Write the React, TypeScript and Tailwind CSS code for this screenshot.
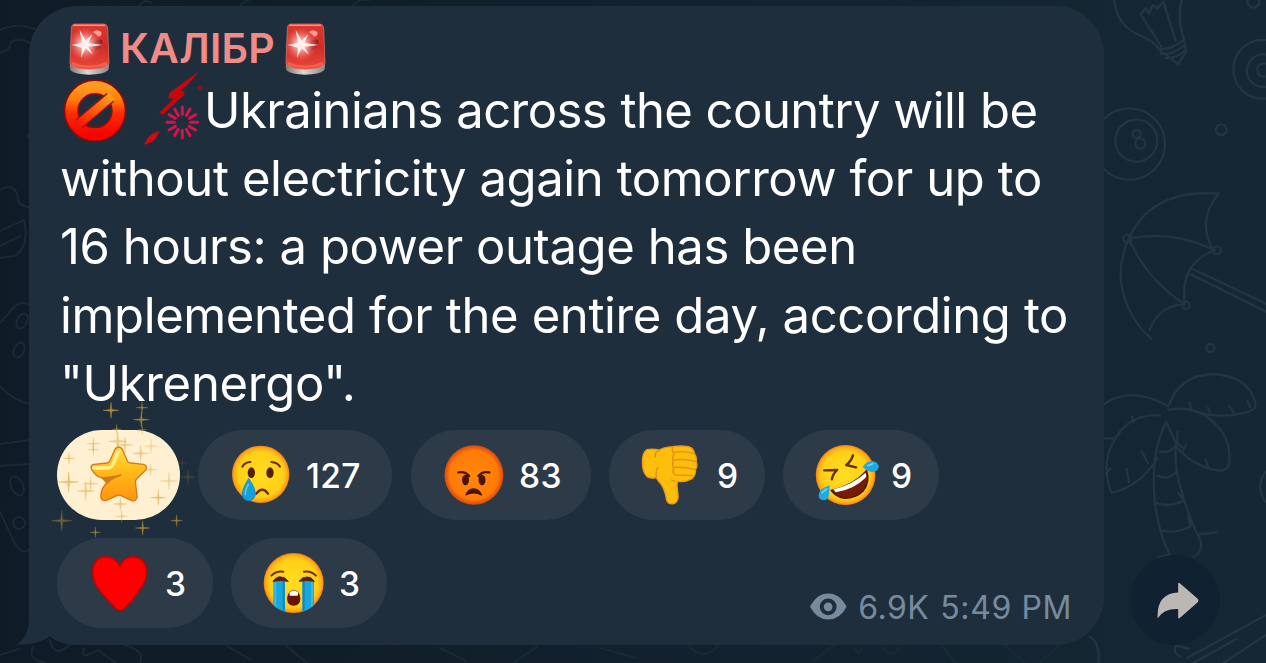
import React from 'react';

const Siren: React.FC<{ id: string }> = ({ id }) => (
  <svg viewBox="207 69 123 159" className="w-[41px] h-[53px] shrink-0">
    <defs>
      <linearGradient id={`${id}-red`} x1="0" y1="0" x2="0" y2="1">
        <stop offset="0" stopColor="#d93a30" />
        <stop offset="0.5" stopColor="#cf2b28" />
        <stop offset="1" stopColor="#ea4a3c" />
      </linearGradient>
      <radialGradient id={`${id}-glow`}>
        <stop offset="0" stopColor="#fff" />
        <stop offset="0.3" stopColor="#ffc9c2" stopOpacity="0.85" />
        <stop offset="1" stopColor="#ff7468" stopOpacity="0" />
      </radialGradient>
      <linearGradient id={`${id}-base`} x1="0" y1="0" x2="1" y2="0">
        <stop offset="0" stopColor="#7f7a78" />
        <stop offset="0.45" stopColor="#ddd8d4" />
        <stop offset="1" stopColor="#8b8684" />
      </linearGradient>
    </defs>
    <path d="M210 186Q208 206 212 211Q226 224 268 224Q310 224 324 211Q329 204 326 186Z" fill={`url(#${id}-base)`} />
    <path d="M222 72H312Q322 73 323 84L327 190Q320 207 268 208Q216 207 210 190L214 84Q215 74 222 72Z" fill={`url(#${id}-red)`} stroke="#e0786c" strokeWidth="2" />
    <path d="M220 76H315" stroke="#ff9e90" strokeWidth="4" />
    <path d="M278 96Q292 86 304 96Q306 110 295 110Q287 102 278 96Z" fill="#ff9b92" />
    <path d="M276 128Q300 112 308 122Q306 146 284 154Z" fill="#8e1721" opacity="0.75" />
    <path d="M216 185Q266 208 321 185L322 196Q268 212 214 196Z" fill="#f5604c" />
    <circle cx="255" cy="133" r="50" fill={`url(#${id}-glow)`} />
    <path d="M239 90L257 122L277 102L265 129L308 135L265 140L279 164L257 145L243 173L246 143L215 135L246 128Z" fill="#fff0ec" />
  </svg>
);

const NoEntry = () => (
  <svg viewBox="190 237 192 192" className="w-16 h-16 shrink-0">
    <defs>
      <linearGradient id="no-ring" x1="0" y1="0" x2="0" y2="1">
        <stop offset="0" stopColor="#ff9a1f" />
        <stop offset="0.28" stopColor="#ff7a08" />
        <stop offset="0.55" stopColor="#fb2c05" />
        <stop offset="1" stopColor="#f50500" />
      </linearGradient>
      <linearGradient id="no-bar" x1="1" y1="0" x2="0" y2="1">
        <stop offset="0" stopColor="#ffa01c" />
        <stop offset="0.5" stopColor="#ff5a0a" />
        <stop offset="1" stopColor="#f81200" />
      </linearGradient>
    </defs>
    <circle cx="286" cy="332" r="71" fill="none" stroke="#8f0b08" strokeWidth="46" />
    <circle cx="286" cy="332" r="71" fill="none" stroke="url(#no-ring)" strokeWidth="36" />
    <path d="M238 372L332 292" stroke="#96150a" strokeWidth="34" />
    <path d="M234 375L337 288" stroke="url(#no-bar)" strokeWidth="25" />
  </svg>
);

const SPOKES = [0, 30, 60, 90, 120, 150, 180, 210, 240, 270, 300, 330];

const Spark = () => (
  <svg viewBox="414 216 198 219" className="w-[66px] h-[73px] shrink-0">
    <path d="M592 219L511 278L506 294H524L480 338L488 343L553 283L548 273H536L558 258Z" fill="#c9060b" stroke="#c9060b" strokeWidth="3" />
    <path d="M480 394Q452 399 444 414L431 434Q456 430 465 418Z" fill="#d10a10" />
    <path d="M590 262L603 256L609 265L599 273Z" fill="#8c1119" />
    <g stroke="#d3144a" strokeWidth="9" strokeLinecap="round">
      {SPOKES.map((deg) => (
        <path key={deg} d="M547 343V321" transform={`rotate(${deg} 547 367)`} />
      ))}
    </g>
  </svg>
);

const StarIcon = () => (
  <svg viewBox="169.5 144 192 192" className="w-16 h-16">
    <defs>
      <linearGradient id="star" x1="0" y1="0" x2="0" y2="1">
        <stop offset="0" stopColor="#ffe04a" />
        <stop offset="0.4" stopColor="#ffbf1a" />
        <stop offset="1" stopColor="#ff9310" />
      </linearGradient>
    </defs>
    <path
      d="M254 162Q264 150 275 162L291 199Q294 203 300 204L340 208Q353 214 345 226L318 252Q314 257 315 264L320 306Q317 322 302 316L270 301Q265 299 259 302L226 317Q211 318 211 304Q212 275 232 262L247 250L212 248Q196 244 183 223Q178 211 190 208L230 204Q236 202 239 196Z"
      fill="url(#star)"
      stroke="#d47a18"
      strokeWidth="4"
      strokeLinejoin="round"
    />
    <path d="M190 219H236Q247 214 251 200L263 171" fill="none" stroke="#ffee8e" strokeWidth="10" strokeLinecap="round" />
    <path d="M212 248Q235 249 272 240Q243 249 228 266" fill="#c97c18" stroke="#d17c17" strokeWidth="4" />
  </svg>
);

const FaceGradient: React.FC<{ id: string }> = ({ id }) => (
  <defs>
    <radialGradient id={id}>
      <stop offset="0" stopColor="#ffdd22" />
      <stop offset="0.8" stopColor="#ffcf17" />
      <stop offset="0.93" stopColor="#ffa916" />
      <stop offset="1" stopColor="#f08018" />
    </radialGradient>
  </defs>
);

const SadIcon = () => (
  <svg viewBox="597 144 192 192" className="w-16 h-16">
    <FaceGradient id="sad" />
    <circle cx="692" cy="238" r="86" fill="url(#sad)" />
    <g fill="none" stroke="#6b2c07" strokeWidth="6" strokeLinecap="round">
      <path d="M637 215Q644 202 661 201" />
      <path d="M724 201Q742 202 750 215" />
      <path d="M679 296Q697 272 714 296" strokeWidth="7" />
    </g>
    <ellipse cx="664" cy="233" rx="11" ry="16" fill="#542103" />
    <ellipse cx="720" cy="233" rx="11" ry="16" fill="#542103" />
    <path d="M656 250Q678 282 676 300Q672 316 656 317Q638 315 636 299Q638 278 656 250Z" fill="#15a0dc" stroke="#087fb9" strokeWidth="2" />
    <path d="M655 268Q645 287 646 298" fill="none" stroke="#57c9f0" strokeWidth="5" strokeLinecap="round" />
  </svg>
);

const AngryIcon = () => (
  <svg viewBox="120 69 182.4 192" preserveAspectRatio="none" className="w-16 h-16">
    <defs>
      <radialGradient id="angry">
        <stop offset="0" stopColor="#ff8a08" />
        <stop offset="0.82" stopColor="#ff7b08" />
        <stop offset="1" stopColor="#d9480d" />
      </radialGradient>
    </defs>
    <ellipse cx="211" cy="165" rx="84" ry="89" fill="url(#angry)" />
    <ellipse cx="187" cy="180" rx="10" ry="16" fill="#4a1402" />
    <ellipse cx="234" cy="180" rx="10" ry="16" fill="#4a1402" />
    <path d="M167 157Q186 153 197 168M255 157Q235 153 224 168" fill="none" stroke="#4a1402" strokeWidth="7" strokeLinecap="round" />
    <path d="M188 225Q194 207 210 206Q226 207 233 225Q210 213 188 225Z" fill="#4a1402" stroke="#4a1402" strokeWidth="3" strokeLinejoin="round" />
  </svg>
);

const ThumbsDownIcon = () => (
  <svg viewBox="684 69 182.4 192" preserveAspectRatio="none" className="w-16 h-16">
    <path
      d="M704 89Q718 85 740 90Q750 82 776 80Q800 76 822 80Q837 84 839 101Q847 112 844 125Q849 137 842 149Q844 166 831 177Q815 187 790 184Q788 202 792 220Q796 245 780 251Q763 253 760 240Q754 200 738 185L730 173Q716 177 704 170Q691 155 691 128Q690 98 704 89Z"
      fill="#ffbd0c"
      stroke="#ec981b"
      strokeWidth="4"
      strokeLinejoin="round"
    />
    <path
      d="M740 91Q724 96 728 111M730 172Q729 149 735 142M776 82Q774 91 781 102Q774 113 779 124Q774 137 780 145Q774 157 785 165M781 98Q806 90 838 101M779 121Q808 115 843 124M779 142Q810 140 841 149M785 165Q806 166 834 167M783 184L774 180"
      fill="none"
      stroke="#e58f14"
      strokeWidth="4"
      strokeLinecap="round"
    />
  </svg>
);

const LaughIcon = () => (
  <svg viewBox="1180 69 182.4 192" preserveAspectRatio="none" className="w-16 h-16 overflow-visible">
    <FaceGradient id="rofl" />
    <ellipse cx="1270" cy="165" rx="85" ry="90" fill="url(#rofl)" />
    <path d="M1229 211Q1294 196 1330 151Q1341 185 1320 213Q1299 235 1268 235Q1243 232 1229 211Z" fill="#761b04" stroke="#4c1803" strokeWidth="4" strokeLinejoin="round" />
    <path d="M1235 208Q1292 193 1327 158Q1331 168 1327 173Q1294 208 1242 217Z" fill="#fff" />
    <path d="M1209 151L1246 150Q1233 163 1231 178M1291 106Q1286 123 1272 135L1300 142" fill="none" stroke="#64310a" strokeWidth="7" strokeLinecap="round" strokeLinejoin="round" />
    <path d="M1319 141Q1331 120 1347 123Q1363 127 1365 140Q1361 156 1345 156Q1333 155 1319 141Z" fill="#1fa9df" />
    <path d="M1224 196Q1225 225 1218 237Q1205 245 1195 235Q1190 222 1199 211Q1208 202 1224 196Z" fill="#1fa9df" />
    <path d="M1333 137L1348 131M1216 207L1203 218" stroke="#6ad4f2" strokeWidth="5" strokeLinecap="round" />
  </svg>
);

const HeartIcon = () => (
  <svg viewBox="264 63 192 192" className="w-16 h-16">
    <path d="M360 107Q371 80 402 80Q435 84 440 119Q442 143 427 168Q406 203 373 236Q360 248 347 236Q312 201 289 168Q275 143 278 118Q283 83 316 80Q345 80 360 107Z" fill="#fe0000" stroke="#ae090c" strokeWidth="5" />
  </svg>
);

const CryIcon = () => (
  <svg viewBox="786 63 192 192" className="w-16 h-16">
    <FaceGradient id="cry" />
    <clipPath id="cry-face">
      <circle cx="881" cy="159" r="90" />
    </clipPath>
    <circle cx="881" cy="159" r="90" fill="url(#cry)" />
    <g clipPath="url(#cry-face)">
      <path d="M820 151H855V248H820ZM907 151H942V248H907Z" fill="#18a8de" />
      <path d="M851 153V248M911 153V248" stroke="#1785bb" strokeWidth="6" />
      <path d="M826 153V240M936 153V240" stroke="#43bee7" strokeWidth="5" />
    </g>
    <path d="M819 154Q832 138 843 141Q856 141 865 154Q841 149 819 154ZM897 154Q907 141 921 141Q933 139 943 154Q920 149 897 154Z" fill="#5c1d05" stroke="#5c1d05" strokeWidth="3" strokeLinejoin="round" />
    <path d="M814 137Q829 122 850 125M912 125Q933 122 948 137" fill="none" stroke="#75310a" strokeWidth="6" strokeLinecap="round" />
    <path d="M881 180Q900 182 901 206Q900 226 881 227Q862 226 861 206Q863 182 881 180Z" fill="#681303" />
    <path d="M868 188Q881 175 895 188L893 197H869Z" fill="#fff" />
  </svg>
);

interface ReactionItem {
  Icon: React.FC;
  count: string;
  width: string;
}

const firstRow: ReactionItem[] = [
  { Icon: SadIcon, count: '127', width: 'w-[194px] mr-[19px]' },
  { Icon: AngryIcon, count: '83', width: 'w-[180px] mr-[18px]' },
  { Icon: ThumbsDownIcon, count: '9', width: 'w-[156px] mr-[18px]' },
  { Icon: LaughIcon, count: '9', width: 'w-[156px]' },
];

const secondRow: ReactionItem[] = [
  { Icon: HeartIcon, count: '3', width: 'w-[156px] mr-[18px]' },
  { Icon: CryIcon, count: '3', width: 'w-[156px]' },
];

const Reaction: React.FC<ReactionItem> = ({ Icon, count, width }) => (
  <button className={`${width} h-[90px] rounded-full bg-[#2d3b49] flex items-center pl-[31px] shrink-0`}>
    <Icon />
    <span className="ml-[13px] pt-0.5 text-[33.5px] font-medium text-white tracking-[0.3px]">{count}</span>
  </button>
);

// x, y, radius, opacity
const sparkles: [number, number, number, number][] = [
  [243, 46, 24, 0.8], [336, 38, 18, 0.65], [334, 74, 24, 0.7], [337, 104, 15, 0.5],
  [260, 103, 15, 0.7], [190, 146, 20, 0.5], [190, 164, 18, 0.5], [263, 139, 28, 0.5],
  [285, 150, 24, 0.5], [332, 175, 24, 0.5], [363, 154, 22, 0.35], [117, 190, 17, 0.6],
  [362, 224, 18, 0.5], [116, 261, 30, 0.6], [182, 266, 22, 0.5], [167, 288, 27, 0.5],
  [417, 258, 25, 0.4], [474, 246, 22, 0.2], [457, 204, 15, 0.15], [385, 308, 24, 0.6],
  [271, 327, 20, 0.55], [275, 364, 18, 0.5], [95, 377, 30, 0.4], [338, 399, 22, 0.7],
  [440, 377, 18, 0.65], [196, 412, 16, 0.7],
];

const Sparkles = () => (
  <svg viewBox="60 15 450 420" className="absolute left-[21px] top-[394px] w-[150px] h-[140px] pointer-events-none">
    {sparkles.map(([x, y, r, opacity]) => (
      <path
        key={`${x}-${y}`}
        d="M0-1L.1-.1L1 0L.1.1L0 1L-.1.1L-1 0L-.1-.1Z"
        transform={`translate(${x} ${y}) scale(${r})`}
        fill="#d9a53a"
        stroke="#d9a53a"
        strokeWidth="0.05"
        opacity={opacity}
      />
    ))}
  </svg>
);

const Wallpaper = () => (
  <svg viewBox="0 0 1266 663" className="absolute inset-0 w-full h-full">
    <g fill="none" stroke="#20323f" strokeWidth="2" strokeLinecap="round" strokeLinejoin="round">
      {/* bulb, candy, billiard ball */}
      <g transform="translate(1090 0) scale(.3333)" stroke="#213542" strokeWidth="7">
        <path d="M73 0Q80 77 149 106Q192 123 207 148M275 0Q261 60 282 118M207 148L264 192L288 158L282 118Q248 150 207 146M212 161Q245 168 285 134M226 174Q256 177 286 151M214 139L152 43L167 24L177 40L188 16L202 25L220 5L257 122" />
        <circle cx="490" cy="5" r="18" />
        <circle cx="518" cy="208" r="88" />
        <circle cx="520" cy="212" r="49" />
        <circle cx="522" cy="210" r="20" />
        <circle cx="118" cy="432" r="107" />
        <circle cx="139" cy="422" r="63" />
        <circle cx="140" cy="402" r="12" />
        <circle cx="151" cy="431" r="15" />
        <circle cx="394" cy="389" r="16" />
        {/* umbrella */}
        <path d="M116 716Q185 565 386 581Q321 658 367 747Q240 690 116 716Q173 841 284 913Q269 790 374 750M116 716Q53 859 157 990L185 1018M284 913Q205 916 179 990M310 808L530 912M304 824L530 936" />
        <circle cx="112" cy="716" r="12" />
        <circle cx="381" cy="751" r="12" />
        <circle cx="288" cy="916" r="11" />
      </g>
      {/* palm tree */}
      <g transform="translate(1090 330) scale(.3333)" stroke="#213542" strokeWidth="7">
        <circle cx="361" cy="54" r="12" />
        <path d="M40 224Q125 164 235 229M235 229Q269 134 370 132Q478 139 496 220Q500 241 466 248Q390 266 330 247M235 239Q320 226 372 278Q427 330 417 402Q412 423 387 422Q306 408 260 350M210 256Q97 248 54 374Q42 438 65 488Q147 473 203 384M229 276Q179 370 195 520Q206 609 239 674L205 682M229 276L258 340Q251 416 277 490Q299 570 331 630Q340 667 310 681M209 365Q238 370 254 350M202 437Q236 453 259 425M200 519Q237 534 282 512L265 490M214 602Q259 612 302 589L294 560M326 613L380 607M126 260L130 275M155 365L174 399M110 416L117 457M60 415L49 432M45 325H68M299 218L303 236M354 233L360 246M417 227L431 247M472 212L481 233M289 345L280 362M347 390L354 407M262 305V342L277 352" />
        <path d="M528 425Q495 465 525 515M270 979Q244 965 259 946L295 957M290 985L528 855M310 999L438 928M0 920Q32 940 25 999" />
        <path d="M400 999L528 915" />
      </g>
      <g stroke="#1a2a35">
        <path d="M0 30Q16 22 35 29M0 53Q10 50 11 43Q17 36 30 43M0 190Q13 182 18 196Q15 204 28 207M0 231L24 220Q30 246 15 256L0 258M0 323L13 308Q20 300 30 305M0 246L20 236M0 386Q12 400 30 404M0 444L30 440M0 466L30 464M0 512L14 542Q22 556 30 549" />
        <ellipse cx="19" cy="350" rx="5" ry="8" transform="rotate(25 19 350)" />
        <ellipse cx="22" cy="321" rx="5" ry="8" transform="rotate(25 22 321)" />
        <ellipse cx="17" cy="486" rx="6" ry="10" transform="rotate(-25 17 486)" />
        <circle cx="19" cy="523" r="6" />
        <circle cx="29" cy="136" r="1.5" />
        <path d="M138 9Q143-3 151 3M238 8Q247-4 263-1M350 8Q358-2 369 0M0 655L19 649M33 647Q27 660 44 662M50 640Q54 659 69 645M84 649Q79 661 98 650L116 663M124 645Q145 650 140 663M227 646L251 660M285 645L307 663M440 648L466 661M513 663L538 646M600 648L636 658M689 646Q703 662 718 646M812 661L835 645M855 648Q858 657 862 648M882 647Q894 660 899 647M941 645L956 663M1005 645L1025 663M1040 662L1060 645" />
      </g>
    </g>
  </svg>
);

export default function App() {
  return (
    <div className="relative w-[1266px] h-[663px] overflow-hidden bg-linear-to-r from-[#0f1b26] to-[#152735] font-['Inter','Noto_Sans',sans-serif]">
      <Wallpaper />
      <div className="relative flex items-end pt-1.5 pl-[29px]">
        <div className="relative w-[1075px] h-[639px] rounded-[48px] bg-[#1f2e3d] shrink-0">
          <svg viewBox="42 180 210 171" className="absolute left-[-15px] bottom-[-1px] w-[70px] h-[57px]">
            <path d="M87 180V270Q84 330 48 346Q108 352 150 322Q176 348 250 348V180Z" fill="#1f2e3d" />
          </svg>

          <div className="flex h-[70px] pt-[17px] pl-10">
            <Siren id="left" />
            <span className="ml-[10px] w-[165px] text-[41px] leading-[50px] font-semibold tracking-[0.2px] text-[#f08c88] whitespace-nowrap">КАЛІБР</span>
            <Siren id="right" />
          </div>

          <div className="pl-8 text-[49px] leading-[68.4px] text-white whitespace-nowrap">
            <div className="flex h-[68.4px] leading-[70px]">
              <div className="flex w-[144px] shrink-0">
                <div className="pt-[3px] pl-0.5"><NoEntry /></div>
                <div className="ml-[11px] -mt-1"><Spark /></div>
              </div>
              <span className="-ml-px tracking-[-0.54px]">Ukrainians across the country will be</span>
            </div>
            <div className="h-[68.4px] -ml-px leading-[70px] tracking-[-0.4px]">without electricity again tomorrow for up to</div>
            <div className="h-[68.4px] -ml-px tracking-[-0.41px]">16 hours: a power outage has been</div>
            <div className="h-[68.4px] -ml-px leading-[69.4px] tracking-[-0.38px]">implemented for the entire day, according to</div>
            <div className="h-[68.4px] -ml-px tracking-[-0.3px]">"Ukrenergo".</div>
          </div>

          <div className="relative flex mt-3 pl-7">
            <button className="w-[123px] h-[90px] mr-[18px] rounded-full bg-[#fff0d2] flex items-center justify-center">
              <StarIcon />
            </button>
            {firstRow.map((item, i) => (
              <Reaction key={i} {...item} />
            ))}
          </div>
          <div className="relative flex mt-[18px] pl-7">
            {secondRow.map((item, i) => (
              <Reaction key={i} {...item} />
            ))}
            <div className="flex items-center h-10 mt-[50px] ml-auto mr-8 text-[#778b9e] text-[32px]">
              <svg viewBox="62 100 110 80" className="w-[37px] h-[27px] -mt-0.5">
                <path d="M62 141Q82 101 116 101Q151 101 171 141Q151 179 116 179Q82 179 62 141Z" fill="currentColor" />
                <circle cx="116" cy="141" r="25" fill="#1f2e3d" />
                <circle cx="116" cy="141" r="13" fill="currentColor" />
              </svg>
              <span className="ml-[11px] tracking-[0.5px]">6.9K</span>
              <span className="ml-[11px] tracking-[0.6px]">5:49 PM</span>
            </div>
          </div>
          <Sparkles />
        </div>

        <button className="ml-[26px] w-[90px] h-[90px] rounded-full bg-[#102231] flex items-center justify-center shrink-0">
          <svg viewBox="200 755 130 110" className="w-[43px] h-[37px] ml-1">
            <path d="M267 759Q267 754 272 758L326 805Q330 810 326 815L272 863Q267 867 267 860V836Q224 834 205 864Q201 789 267 786Z" fill="#bbb7b5" />
          </svg>
        </button>
      </div>
    </div>
  );
}
